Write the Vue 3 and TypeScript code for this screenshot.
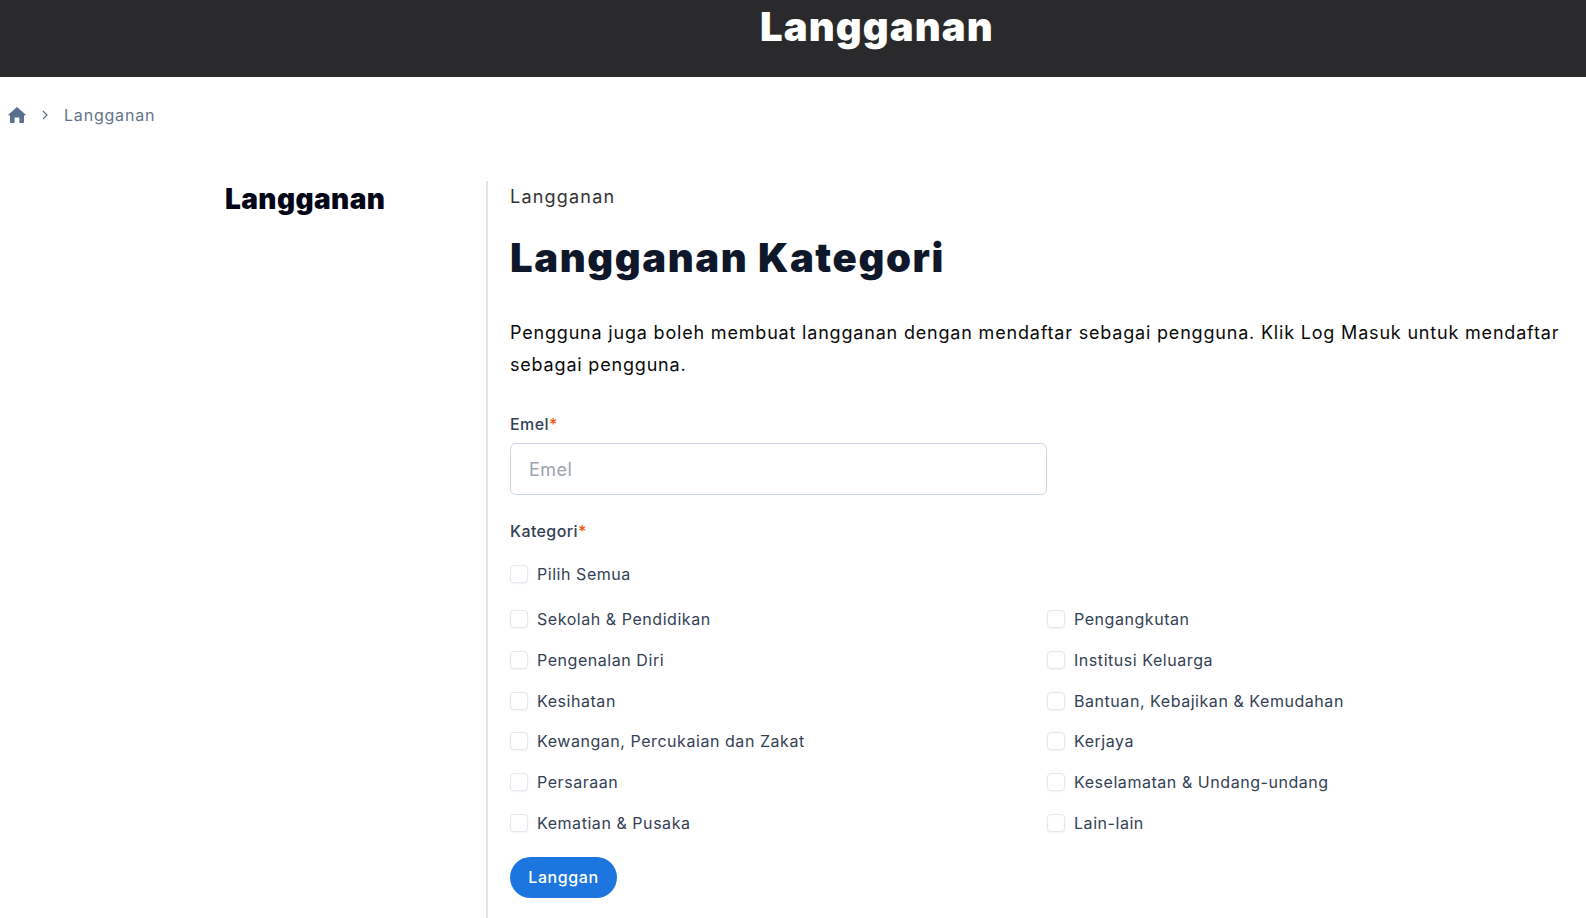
<script setup lang="ts">
const rows: string[] = [
  'Sekolah & Pendidikan', 'Pengangkutan',
  'Pengenalan Diri', 'Institusi Keluarga',
  'Kesihatan', 'Bantuan, Kebajikan & Kemudahan',
  'Kewangan, Percukaian dan Zakat', 'Kerjaya',
  'Persaraan', 'Keselamatan & Undang-undang',
  'Kematian & Pusaka', 'Lain-lain',
]
</script>

<template>
  <div class="page">
    <header class="banner"><h1>Langganan</h1></header>
    <nav class="crumbs">
      <svg class="home" viewBox="0 0 18 16" aria-hidden="true">
        <path d="M9 0 L18 8 L16 8.6 V15 a1 1 0 0 1 -1 1 H11.4 V10.6 H6.6 V16 H3 a1 1 0 0 1 -1 -1 V8.6 L0 8 Z" />
      </svg>
      <svg class="chev" viewBox="0 0 6 10" aria-hidden="true"><path d="M1 1 L5 5 L1 9" /></svg>
      <span>Langganan</span>
    </nav>
    <main class="layout">
      <aside class="side"><h2>Langganan</h2></aside>
      <section class="content">
        <p class="kicker">Langganan</p>
        <h3>Langganan Kategori</h3>
        <p class="intro">Pengguna juga boleh membuat langganan dengan mendaftar sebagai pengguna. Klik Log Masuk untuk mendaftar sebagai pengguna.</p>
        <form @submit.prevent>
          <label class="lbl" for="emel">Emel<i>*</i></label>
          <input id="emel" class="field" type="text" placeholder="Emel" />
          <div class="lbl second">Kategori<i>*</i></div>
          <label class="check all"><input type="checkbox" /><span>Pilih Semua</span></label>
          <div class="grid">
            <label v-for="r in rows" :key="r" class="check"><input type="checkbox" /><span>{{ r }}</span></label>
          </div>
          <button type="submit" class="btn">Langgan</button>
        </form>
      </section>
    </main>
  </div>
</template>

<style>
html, body { margin: 0; background: #fff; overflow: hidden; }
</style>

<style scoped>
.page { font-family: Inter, "Liberation Sans", sans-serif; height: 918px; overflow: hidden; display: flex; flex-direction: column; }
.banner { height: 77px; background: #2a2a2c; display: flex; justify-content: center; flex: none; padding-left: 168px; box-sizing: border-box; }
.banner h1 { margin: 0; color: #fff; font-size: 40px; line-height: 54px; font-weight: 900; letter-spacing: 1.1px; }
.crumbs { display: flex; align-items: center; height: 76px; padding-left: 8px; flex: none; color: #64748b; font-size: 16px; letter-spacing: 0.8px; box-sizing: border-box; }
.home { width: 18px; height: 16px; fill: #5a6e8f; margin-right: 16px; }
.chev { width: 6px; height: 10px; fill: none; stroke: #5a6e8f; stroke-width: 1.2; margin-right: 16px; }
.layout { display: flex; flex: 1; padding-top: 28px; min-height: 0; }
.side { width: 486px; flex: none; box-sizing: border-box; padding-left: 225px; }
.side h2 { margin: 0; font-size: 28px; line-height: 36px; font-weight: 900; letter-spacing: 0.4px; color: #020617; }
.content { flex: 1; border-left: 2px solid #e5e5e5; padding-left: 22px; }
.kicker { margin: 0; font-size: 18px; line-height: 32px; letter-spacing: 1.2px; color: #333; }
h3 { margin: 15px 0 0; font-size: 40px; line-height: 60px; font-weight: 900; letter-spacing: 1.6px; color: #0f172a; }
.intro { margin: 29px 0 0; width: 1056px; font-size: 18px; line-height: 32px; letter-spacing: 0.81px; color: #0a0a0a; }
form { margin-top: 31px; }
.lbl { display: block; font-size: 16px; line-height: 24px; font-weight: 500; letter-spacing: 0.4px; color: #334155; }
.lbl i { color: #ea580c; font-style: normal; }
.field { display: block; box-sizing: border-box; width: 537px; height: 52px; margin-top: 7px; padding: 0 18px; border: 1px solid #cbd5e1; border-radius: 6px; font: inherit; font-size: 18px; letter-spacing: 0.5px; outline: none; }
.field::placeholder { color: #9ca3af; }
.second { margin-top: 24px; }
.check { display: flex; align-items: center; gap: 9px; font-size: 16px; line-height: 24px; letter-spacing: 0.55px; color: #334155; height: 24px; }
.check input { appearance: none; margin: 0; width: 18px; height: 18px; flex: none; border: 1px solid #e2e8f0; border-radius: 4px; background: #fff; box-shadow: 0 1px 2px rgba(15, 23, 42, 0.05); }
.all { margin-top: 19px; }
.grid { display: grid; grid-template-columns: 537px 1fr; row-gap: 16.8px; margin-top: 21px; }
.btn { display: block; margin-top: 22px; width: 107px; height: 41px; border: 0; border-radius: 21px; background: #1d76e0; color: #fff; font: inherit; font-size: 16px; font-weight: 500; letter-spacing: 0.6px; }
</style>
